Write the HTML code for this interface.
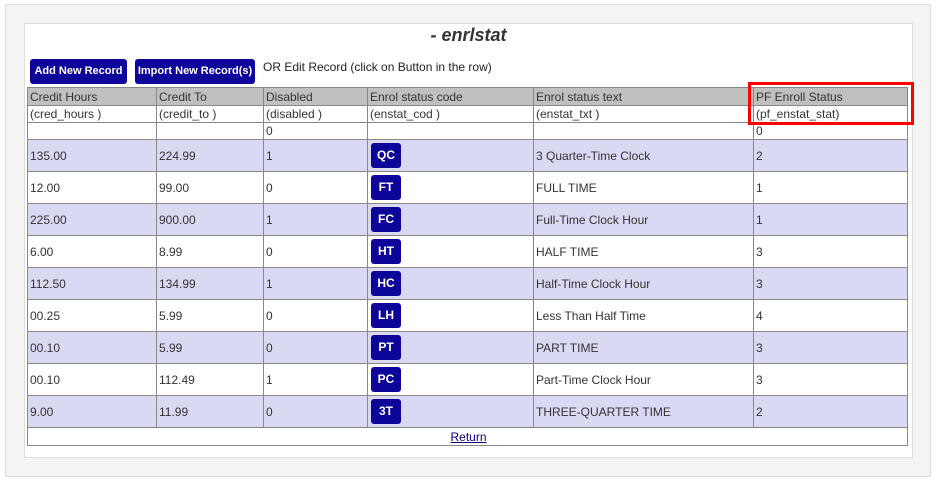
<!DOCTYPE html>
<html><head><meta charset="utf-8"><style>
body{margin:0;background:#fff;font-family:"Liberation Sans",Arial,sans-serif;}
.outer{position:absolute;left:5px;top:4px;width:924px;height:471px;background:#f4f4f4;border:1px solid #ddd;border-radius:2px;}
.inner{position:absolute;left:24px;top:23px;width:887px;height:433px;background:#fff;border:1px solid #ddd;}
.title{position:absolute;left:0;width:887px;text-align:center;font-weight:bold;font-style:italic;font-size:18px;color:#333;line-height:22px;top:0px;}
.btn{position:absolute;top:35px;height:25px;background:#0d0599;color:#fff;font-size:11px;font-weight:bold;line-height:25px;text-align:center;border-radius:3px;}
.note{position:absolute;left:238px;top:36px;font-size:12px;color:#222;}
table{position:absolute;left:2px;top:63px;border-collapse:collapse;width:881px;font-size:12px;color:#333;}
td{border:1px solid #888;padding:0 0 0 2px;}
tr.h td{background:#c0c0c0;height:17px;}
tr.s td{height:16px;}
tr.d td{height:31px;}
tr.a td{background:#d9d9f3;}
.c{display:inline-block;background:#0d0599;color:#fff;font-weight:bold;border-radius:3px;width:30px;height:25px;line-height:25px;text-align:center;margin-left:1px;vertical-align:middle}
a{color:#0b0080;}
.red{position:absolute;left:748px;top:82px;width:166px;height:43px;border:3px solid #f00;box-sizing:border-box;}
</style></head><body>
<div class="outer"></div>
<div class="inner">
<div class="title">- enrlstat</div>
<div class="btn" style="left:5px;width:97px">Add New Record</div>
<div class="btn" style="left:110px;width:120px">Import New Record(s)</div>
<div class="note">OR Edit Record (click on Button in the row)</div>
<table>
<colgroup><col style="width:129px"><col style="width:107px"><col style="width:104px"><col style="width:166px"><col style="width:220px"><col style="width:154px"></colgroup>
<tr class="h"><td>Credit Hours</td><td>Credit To</td><td>Disabled</td><td>Enrol status code</td><td>Enrol status text</td><td>PF Enroll Status</td></tr>
<tr class="s"><td>(cred_hours )</td><td>(credit_to )</td><td>(disabled )</td><td>(enstat_cod )</td><td>(enstat_txt )</td><td>(pf_enstat_stat)</td></tr>
<tr class="s"><td></td><td></td><td>0</td><td></td><td></td><td>0</td></tr>
<tr class="d a"><td>135.00</td><td>224.99</td><td>1</td><td><span class="c">QC</span></td><td>3 Quarter-Time Clock</td><td>2</td></tr>
<tr class="d"><td>12.00</td><td>99.00</td><td>0</td><td><span class="c">FT</span></td><td>FULL TIME</td><td>1</td></tr>
<tr class="d a"><td>225.00</td><td>900.00</td><td>1</td><td><span class="c">FC</span></td><td>Full-Time Clock Hour</td><td>1</td></tr>
<tr class="d"><td>6.00</td><td>8.99</td><td>0</td><td><span class="c">HT</span></td><td>HALF TIME</td><td>3</td></tr>
<tr class="d a"><td>112.50</td><td>134.99</td><td>1</td><td><span class="c">HC</span></td><td>Half-Time Clock Hour</td><td>3</td></tr>
<tr class="d"><td>00.25</td><td>5.99</td><td>0</td><td><span class="c">LH</span></td><td>Less Than Half Time</td><td>4</td></tr>
<tr class="d a"><td>00.10</td><td>5.99</td><td>0</td><td><span class="c">PT</span></td><td>PART TIME</td><td>3</td></tr>
<tr class="d"><td>00.10</td><td>112.49</td><td>1</td><td><span class="c">PC</span></td><td>Part-Time Clock Hour</td><td>3</td></tr>
<tr class="d a"><td>9.00</td><td>11.99</td><td>0</td><td><span class="c">3T</span></td><td>THREE-QUARTER TIME</td><td>2</td></tr>
<tr><td colspan="6" style="text-align:center;height:17px"><a href="#">Return</a></td></tr>
</table>
</div>
<div class="red"></div>
</body></html>
